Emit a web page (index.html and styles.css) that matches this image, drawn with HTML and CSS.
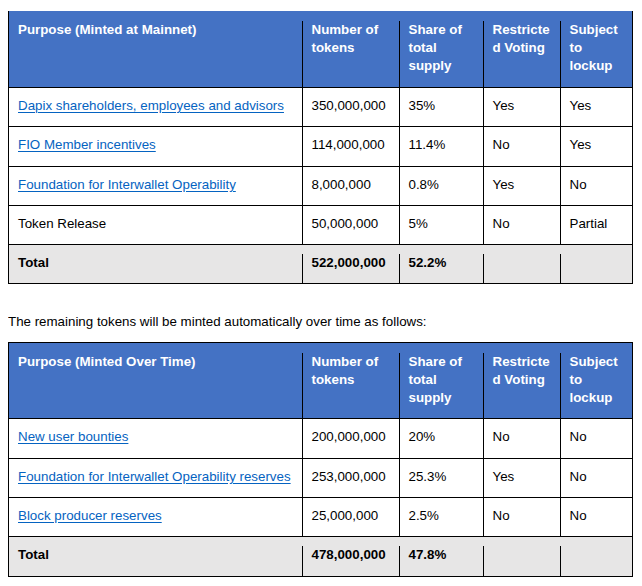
FILE: index.html
```html
<!DOCTYPE html>
<html lang="en">
<head>
<meta charset="utf-8">
<title>Token distribution</title>
<link rel="stylesheet" href="styles.css">
</head>
<body>
<div class="tbl tbl--first">
  <div class="cell head first">Purpose (Minted at Mainnet)</div>
  <div class="cell head">Number of<br>tokens</div>
  <div class="cell head">Share of<br>total<br>supply</div>
  <div class="cell head">Restricte<br>d Voting</div>
  <div class="cell head last">Subject<br>to<br>lockup</div>

  <div class="cell first"><a href="#">Dapix shareholders, employees and advisors</a></div>
  <div class="cell">350,000,000</div>
  <div class="cell">35%</div>
  <div class="cell">Yes</div>
  <div class="cell">Yes</div>

  <div class="cell first"><a href="#">FIO Member incentives</a></div>
  <div class="cell">114,000,000</div>
  <div class="cell">11.4%</div>
  <div class="cell">No</div>
  <div class="cell">Yes</div>

  <div class="cell first"><a href="#">Foundation for Interwallet Operability</a></div>
  <div class="cell">8,000,000</div>
  <div class="cell">0.8%</div>
  <div class="cell">Yes</div>
  <div class="cell">No</div>

  <div class="cell first">Token Release</div>
  <div class="cell">50,000,000</div>
  <div class="cell">5%</div>
  <div class="cell">No</div>
  <div class="cell">Partial</div>

  <div class="cell total first">Total</div>
  <div class="cell total">522,000,000</div>
  <div class="cell total">52.2%</div>
  <div class="cell total"></div>
  <div class="cell total last"></div>
</div>

<p class="note">The remaining tokens will be minted automatically over time as follows:</p>

<div class="tbl tbl--boxed">
  <div class="cell head first">Purpose (Minted Over Time)</div>
  <div class="cell head">Number of<br>tokens</div>
  <div class="cell head">Share of<br>total<br>supply</div>
  <div class="cell head">Restricte<br>d Voting</div>
  <div class="cell head last">Subject<br>to<br>lockup</div>

  <div class="cell first"><a href="#">New user bounties</a></div>
  <div class="cell">200,000,000</div>
  <div class="cell">20%</div>
  <div class="cell">No</div>
  <div class="cell">No</div>

  <div class="cell first"><a href="#">Foundation for Interwallet Operability reserves</a></div>
  <div class="cell">253,000,000</div>
  <div class="cell">25.3%</div>
  <div class="cell">Yes</div>
  <div class="cell">No</div>

  <div class="cell first"><a href="#">Block producer reserves</a></div>
  <div class="cell">25,000,000</div>
  <div class="cell">2.5%</div>
  <div class="cell">No</div>
  <div class="cell">No</div>

  <div class="cell total first">Total</div>
  <div class="cell total">478,000,000</div>
  <div class="cell total">47.8%</div>
  <div class="cell total"></div>
  <div class="cell total last"></div>
</div>
</body>
</html>
```
FILE: styles.css
```css
* {
  box-sizing: border-box;
}

body {
  margin: 8px;
  background: #ffffff;
  color: #000000;
  font-family: "Liberation Sans", Arial, sans-serif;
  font-size: 13.33px;
  line-height: 18px;
}

.tbl {
  display: grid;
  grid-template-columns: 295px 97px 84px 77px 72px;
  width: 625px;
}

.tbl--first {
  margin-top: 3px;
}

.tbl--boxed {
  border-top: 1px solid #000000;
}

.cell {
  padding: 9px 8px 11.3px 8.5px;
  border-right: 1px solid #000000;
  border-bottom: 1px solid #000000;
  white-space: nowrap;
}

.cell.first {
  border-left: 1px solid #000000;
  padding-left: 9px;
}

.cell a {
  color: #0563c1;
  text-decoration: underline;
  text-underline-offset: 2px;
}

.cell.head {
  padding-top: 10px;
  padding-bottom: 12px;
  font-weight: bold;
  color: #ffffff;
  border-right: none;
  background: linear-gradient(#000000, #000000) right 10px / 1px 100% no-repeat, #4472c4;
}

.tbl--boxed .cell.head {
  padding-top: 9.5px;
  padding-bottom: 11.5px;
}

.cell.head.last {
  border-right: 1px solid #000000;
  background: #4472c4;
}

.cell.total {
  font-weight: bold;
  border-right: none;
  background: linear-gradient(#000000, #000000) right 9px / 1px 100% no-repeat, #e7e6e6;
}

.cell.total.last {
  border-right: 1px solid #000000;
  background: #e7e6e6;
}

.note {
  margin: 29px 0 11px;
}
```
